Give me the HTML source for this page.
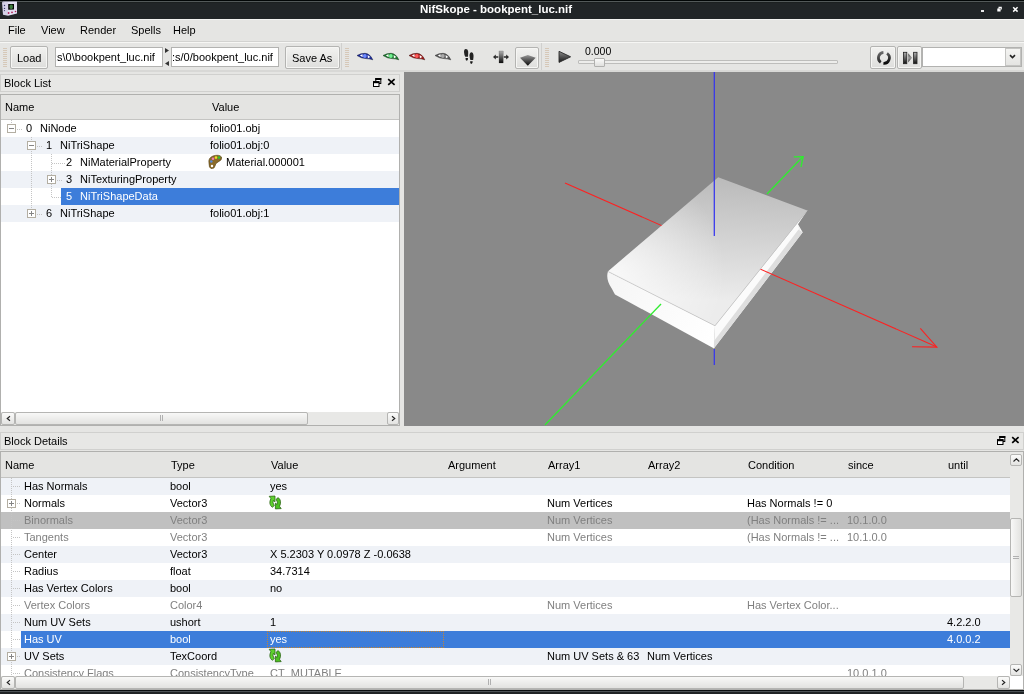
<!DOCTYPE html>
<html><head><meta charset="utf-8">
<style>
*{margin:0;padding:0;box-sizing:border-box}
.t{will-change:transform}
html,body{width:1024px;height:694px;overflow:hidden;background:#e5e5e3;font-family:"Liberation Sans",sans-serif;font-size:11px;color:#000}
.a{position:absolute}
.t{position:absolute;white-space:nowrap;line-height:17px;height:17px}
.btn{position:absolute;border:1px solid #b4b4b2;border-radius:2px;background:linear-gradient(#f2f2f0,#e6e6e4 60%,#dededc);box-shadow:inset 0 0 0 1px #f6f6f4}
.fld{position:absolute;background:#fff;border:1px solid #b2b2b0;overflow:hidden}
.grip{position:absolute;width:4px;background:repeating-linear-gradient(#d6c8b8 0 1px,transparent 1px 2px)}
.alt{background:#eff2f7}
.sel{background:#3d7dda;color:#fff}
.dis{background:#c0c0c0}
.g{color:#808080}
.box{position:absolute;width:9px;height:9px;border:1px solid #b3aea2;background:#fff}
.box:before{content:"";position:absolute;left:1px;top:3px;width:5px;height:1px;background:#858585}
.box.p:after{content:"";position:absolute;left:3px;top:1px;width:1px;height:5px;background:#858585}
.vd{position:absolute;width:1px;background:repeating-linear-gradient(#c4c4c4 0 1px,transparent 1px 2px)}
.hd{position:absolute;height:1px;background:repeating-linear-gradient(90deg,#c4c4c4 0 1px,transparent 1px 2px)}
.sbb{position:absolute;border:1px solid #b5b5b3;border-radius:2px;background:linear-gradient(#fbfbfa,#e3e3e1)}
</style></head><body>

<!-- title bar -->
<div class="a" style="left:0;top:0;width:1024px;height:1px;background:#020606"></div>
<div class="a" style="left:0;top:1px;width:1024px;height:1px;background:#535959"></div><div class="a" style="left:0;top:2px;width:1024px;height:1px;background:#1c2020"></div>
<div class="a" style="left:0;top:3px;width:1024px;height:15.5px;background:#212527"></div>
<div class="t" style="left:420px;top:1px;line-height:17px;font-weight:bold;font-size:11.5px;color:#fff">NifSkope - bookpent_luc.nif</div>
<!-- app icon -->
<svg class="a" style="left:0;top:0" width="20" height="18" viewBox="0 0 20 18">
<path d="M2 2.3 L8 1.8 L8 15.8 L3 14.8 Z" fill="#d6d2e8"/>
<path d="M8 1.8 L17 1.5 L17 13.6 L8 15.8Z" fill="#e2def0"/>
<path d="M2 2.3 L8 1.8 L17 1.5 L16 1.2 L3 1.5Z" fill="#c9c3e0"/>
<path d="M8.2 4 L14 3.9 L14 9.6 L8.2 9.7Z" fill="#060606"/>
<ellipse cx="11.2" cy="6.8" rx="1.8" ry="2.4" fill="#3d7a3d"/>
<circle cx="8.6" cy="13" r="0.9" fill="#b02058"/><circle cx="12" cy="12.3" r="0.9" fill="#b02058"/><circle cx="15.5" cy="11.5" r="0.8" fill="#b02058"/>
<circle cx="4.5" cy="5.5" r="0.7" fill="#3a3a6a"/><circle cx="4.5" cy="8.4" r="0.7" fill="#3a3a6a"/><circle cx="4.5" cy="10.6" r="0.6" fill="#3a3a6a"/>
</svg>
<!-- window buttons -->
<div class="a" style="left:981px;top:10px;width:3px;height:2px;background:#e8e8e8"></div>
<svg class="a" style="left:996px;top:6px" width="7" height="6" viewBox="0 0 7 6"><path d="M2.5 0.8h3.3v2.8h-1.2v1.8h-3.3v-2.8h1.2z" fill="#fff"/><path d="M3.6 2.2h1v1h-1z" fill="#202427"/></svg>
<svg class="a" style="left:1012px;top:6px" width="7" height="7" viewBox="0 0 7 7"><path d="M1.2 1.2L5.6 5.6M5.6 1.2L1.2 5.6" stroke="#fff" stroke-width="1.5"/></svg>
<!-- menu bar -->
<div class="a" style="left:0;top:18.5px;width:1024px;height:1px;background:#f3f3f1"></div>
<div class="a" style="left:0;top:41px;width:1024px;height:1px;background:#d2d2d0"></div>
<div class="a" style="left:0;top:42px;width:1024px;height:1px;background:#f6f6f4"></div>
<div class="t" style="left:8px;top:22px">File</div>
<div class="t" style="left:41px;top:22px">View</div>
<div class="t" style="left:80px;top:22px">Render</div>
<div class="t" style="left:131px;top:22px">Spells</div>
<div class="t" style="left:173px;top:22px">Help</div>

<!-- toolbar -->
<div class="a" style="left:0;top:70px;width:1024px;height:2px;background:#d8d8d6"></div>
<div class="grip" style="left:3px;top:48px;height:19px"></div>
<div class="btn" style="left:10px;top:46px;width:38px;height:23px"></div>
<div class="t" style="left:17px;top:50px">Load</div>
<div class="fld" style="left:55px;top:47px;width:108px;height:20px"><div class="t" style="left:-2px;top:1px">:s\0\bookpent_luc.nif</div></div>
<svg class="a" style="left:164px;top:48px" width="6" height="18"><path d="M1 0L5 2.5L1 5Z M5 13L1 15.5L5 18Z" fill="#333"/></svg>
<div class="fld" style="left:171px;top:47px;width:108px;height:20px"><div class="t" style="left:0px;top:1px">:s/0/bookpent_luc.nif</div></div>
<div class="btn" style="left:285px;top:46px;width:55px;height:23px"></div>
<div class="t" style="left:292px;top:50px">Save As</div>
<div class="a" style="left:341px;top:43px;width:1px;height:27px;background:#d0d0ce"></div>
<div class="grip" style="left:345px;top:48px;height:19px"></div>

<!-- eyes -->
<svg class="a" style="left:355px;top:50px" width="100" height="14" viewBox="0 0 100 14">
<g id="eye1"><path d="M2 5.5 Q6 3.2 10 3.3 Q15 3.6 17.8 9.8 Q14 8.6 11 8.6 Q6 8.3 2 5.5Z" fill="#1c2a9c" stroke="#101840" stroke-width="0.5"/>
<ellipse cx="9.8" cy="6.1" rx="1.9" ry="2" fill="#6f8cff"/>
<path d="M4.8 5.3 L7.6 4.3 L7.6 7.3Z M12.6 5 L15.3 6.9 L12.9 8.2Z" fill="#fff"/></g>
<g transform="translate(26,0)"><path d="M2 5.5 Q6 3.2 10 3.3 Q15 3.6 17.8 9.8 Q14 8.6 11 8.6 Q6 8.3 2 5.5Z" fill="#1e7a30" stroke="#103818" stroke-width="0.5"/>
<ellipse cx="9.8" cy="6.1" rx="1.9" ry="2" fill="#70f090"/>
<path d="M4.8 5.3 L7.6 4.3 L7.6 7.3Z M12.6 5 L15.3 6.9 L12.9 8.2Z" fill="#fff"/></g>
<g transform="translate(52,0)"><path d="M2 5.5 Q6 3.2 10 3.3 Q15 3.6 17.8 9.8 Q14 8.6 11 8.6 Q6 8.3 2 5.5Z" fill="#a01818" stroke="#401010" stroke-width="0.5"/>
<ellipse cx="9.8" cy="6.1" rx="1.9" ry="2" fill="#ff5a5a"/>
<path d="M4.8 5.3 L7.6 4.3 L7.6 7.3Z M12.6 5 L15.3 6.9 L12.9 8.2Z" fill="#fff"/></g>
<g transform="translate(78,0)"><path d="M2 5.5 Q6 3.2 10 3.3 Q15 3.6 17.8 9.8 Q14 8.6 11 8.6 Q6 8.3 2 5.5Z" fill="#5a5a5a" stroke="#303030" stroke-width="0.5"/>
<ellipse cx="9.8" cy="6.1" rx="1.9" ry="2" fill="#aaaaaa"/>
<path d="M4.8 5.3 L7.6 4.3 L7.6 7.3Z M12.6 5 L15.3 6.9 L12.9 8.2Z" fill="#fff"/></g>
</svg>
<!-- footprints -->
<svg class="a" style="left:460px;top:46px" width="16" height="20" viewBox="0 0 16 20">
<path d="M5.8 2.9 Q4 3 4 6 Q4.2 9 5.3 10.8 L8 10.8 Q8.4 7 8.1 5 Q7.6 2.8 5.8 2.9Z" fill="#222"/>
<path d="M5.5 12.1 L8 12.1 Q8.2 14.8 6.7 14.8 Q5.4 14.6 5.5 12.1Z" fill="#1a1a1a"/>
<path d="M11.6 6.2 Q9.5 6.4 9.5 9.5 Q9.7 12.5 10.4 14.1 L13.1 14.1 Q13.7 11 13.5 9 Q13.1 6.1 11.6 6.2Z" fill="#222"/>
<path d="M10.1 15.3 L12.7 15.3 Q12.8 18 11.3 18 Q10 17.8 10.1 15.3Z" fill="#1a1a1a"/>
</svg>
<!-- arrows icon -->
<svg class="a" style="left:492px;top:50px" width="18" height="14" viewBox="0 0 18 14">
<defs><linearGradient id="bg1" x1="0" y1="0" x2="0" y2="1"><stop offset="0" stop-color="#b0b0b0"/><stop offset="1" stop-color="#0a0a0a"/></linearGradient></defs>
<rect x="7" y="1" width="4.2" height="12" fill="url(#bg1)" stroke="#333" stroke-width="0.2"/>
<path d="M1 7 L3.8 4.6 L3.8 6.3 L6.3 6.3 L6.3 7.7 L3.8 7.7 L3.8 9.4Z M17 7 L14.2 4.6 L14.2 6.3 L11.8 6.3 L11.8 7.7 L14.2 7.7 L14.2 9.4Z" fill="#2a2a2a"/>
</svg>
<!-- dropdown button -->
<div class="btn" style="left:515px;top:47px;width:24px;height:22px"></div>
<svg class="a" style="left:519px;top:54px" width="18" height="13" viewBox="519 54 18 13">
<defs><linearGradient id="tg" x1="0" y1="0" x2="0" y2="1"><stop offset="0" stop-color="#9a9a9a"/><stop offset="1" stop-color="#080808"/></linearGradient></defs>
<path d="M520 57.8 L527.8 55 L535.7 57.8 L527.8 65.8Z" fill="url(#tg)"/>
</svg>
<div class="a" style="left:541px;top:43px;width:1px;height:27px;background:#d0d0ce"></div>
<div class="grip" style="left:545px;top:48px;height:19px"></div>
<!-- play -->
<svg class="a" style="left:557px;top:50px" width="15" height="14" viewBox="0 0 15 14">
<defs><linearGradient id="pg" x1="0" y1="0" x2="0" y2="1"><stop offset="0" stop-color="#8a8a8a"/><stop offset="1" stop-color="#1a1a1a"/></linearGradient></defs>
<path d="M2 1.3 L13.6 6.8 L2 12.4Z" fill="url(#pg)" stroke="#2a2a2a" stroke-width="0.9" stroke-linejoin="round"/>
</svg>
<div class="t" style="left:585px;top:43px;font-size:10.5px">0.000</div>
<div class="a" style="left:578px;top:60px;width:260px;height:4px;border:1px solid #bdbdbb;background:#ededeb;border-radius:1px"></div>
<div class="a" style="left:594px;top:58px;width:11px;height:9px;border:1px solid #b0b0ae;background:linear-gradient(#fafaf9,#e0e0de);border-radius:1px"></div>
<!-- right buttons -->
<div class="btn" style="left:870px;top:46px;width:26px;height:23px"></div>
<svg class="a" style="left:874px;top:48px" width="20" height="20" viewBox="0 0 20 20">
<defs><linearGradient id="lg1" x1="0" y1="0" x2="0" y2="1"><stop offset="0" stop-color="#6a6a6a"/><stop offset="1" stop-color="#2a2a2a"/></linearGradient>
<linearGradient id="lg2" x1="0" y1="0" x2="0" y2="1"><stop offset="0" stop-color="#555"/><stop offset="1" stop-color="#0a0a0a"/></linearGradient></defs>
<path d="M9.42 4.32 A5.5 5.5 0 0 0 6.75 14.3" fill="none" stroke="url(#lg1)" stroke-width="2.7"/>
<path d="M13.05 5.3 A5.5 5.5 0 0 1 9.42 15.28" fill="none" stroke="url(#lg2)" stroke-width="2.7"/>
</svg>
<div class="btn" style="left:897px;top:46px;width:25px;height:23px"></div>
<svg class="a" style="left:902px;top:51px" width="16" height="14" viewBox="0 0 16 14">
<defs><linearGradient id="sg" x1="0" y1="0" x2="0" y2="1"><stop offset="0" stop-color="#b0b0b0"/><stop offset="1" stop-color="#111"/></linearGradient>
<linearGradient id="sg2" x1="0" y1="0" x2="0" y2="1"><stop offset="0" stop-color="#444"/><stop offset="0.5" stop-color="#999"/><stop offset="1" stop-color="#333"/></linearGradient></defs>
<rect x="1.4" y="1.3" width="3.4" height="11.4" fill="url(#sg)" stroke="#222" stroke-width="0.8"/>
<rect x="11.6" y="1.3" width="3.4" height="11.4" fill="url(#sg)" stroke="#222" stroke-width="0.8"/>
<path d="M6.2 2.3 L10 6.8 L6.2 11.6Z" fill="url(#sg2)"/>
</svg>
<div class="fld" style="left:922px;top:47px;width:100px;height:20px"></div>
<div class="a" style="left:1005px;top:48px;width:16px;height:18px;border:1px solid #c4c4c2;background:linear-gradient(#f4f4f2,#e4e4e2)"></div>
<svg class="a" style="left:1009px;top:54px" width="7" height="5"><path d="M1 1.2L3.5 3.6L6 1.2" fill="none" stroke="#222" stroke-width="1.6"/></svg>


<!-- viewport -->
<svg class="a" style="left:404px;top:72px" width="620" height="354" viewBox="404 72 620 354">
<defs>
<linearGradient id="cov" gradientUnits="userSpaceOnUse" x1="718" y1="177" x2="712" y2="300">
<stop offset="0" stop-color="#bababa"/><stop offset="1" stop-color="#ececec"/></linearGradient>
<radialGradient id="covh" gradientUnits="userSpaceOnUse" cx="615" cy="272" r="110">
<stop offset="0" stop-color="#fff" stop-opacity="0.75"/><stop offset="1" stop-color="#fff" stop-opacity="0"/></radialGradient>
<linearGradient id="spn" gradientUnits="userSpaceOnUse" x1="610" y1="280" x2="714" y2="340">
<stop offset="0" stop-color="#f6f6f6"/><stop offset="1" stop-color="#ffffff"/></linearGradient>
</defs>
<rect x="404" y="72" width="620" height="354" fill="#898989"/>
<!-- spine/front face -->
<path d="M607.9 271.4 Q605.5 280 611.9 288.8 Q613.5 292 615 294.4 L714.1 348.6 L715 325.8Z" fill="url(#spn)"/>
<!-- pages right face -->
<path d="M715 325.8 L807.3 210.4 L798 224.2 L802.7 232.3 L713.8 348.6Z" fill="#fbfbfb"/>
<path d="M798.5 229.5 L802.7 232.3 L713.8 348.6 L714 341Z" fill="#dedede"/>
<path d="M798 224.2 L800 230 L799.5 231 Z" fill="#e6e6e6"/>
<!-- axes -->
<line x1="565" y1="183" x2="937" y2="347" stroke="#ff2020" stroke-width="1.05"/>
<path d="M920.3 328.4 L936.9 347.1 L912 346.7" fill="none" stroke="#ff2020" stroke-width="1.05"/>
<line x1="545" y1="425" x2="661" y2="304" stroke="#30ec30" stroke-width="1.35"/>
<line x1="767" y1="194" x2="803" y2="156.5" stroke="#30ec30" stroke-width="1.35"/>
<path d="M793.8 156.9 L803.1 156.6 L801 167" fill="none" stroke="#30ec30" stroke-width="1.35"/>
<!-- cover -->
<path d="M718.2 177.2 L807.3 210.4 L715 325.8 L607.9 271.4 Z" fill="url(#cov)"/>
<path d="M718.2 177.2 L807.3 210.4 L715 325.8 L607.9 271.4 Z" fill="url(#covh)"/>
<path d="M807.3 210.4 L715 325.8 L607.9 271.4" fill="none" stroke="#c4c4c4" stroke-width="0.7"/>
<line x1="714.3" y1="72" x2="714.3" y2="236" stroke="#3535ee" stroke-width="1.25"/>
<line x1="714.3" y1="349" x2="714.3" y2="365" stroke="#3535ee" stroke-width="1.25"/>
</svg>

<!-- Block list dock -->
<div class="a" style="left:0;top:74px;width:400px;height:18px;border:1px solid #d0d0ce;background:#e7e7e5"></div>
<div class="t" style="left:4px;top:75px">Block List</div>
<svg class="a" style="left:373px;top:78px" width="9" height="9" viewBox="0 0 9 9"><rect x="2.8" y="0.5" width="5" height="5" fill="#fff" stroke="#000" stroke-width="1"/><rect x="2.3" y="0" width="6" height="2" fill="#000"/><rect x="0.5" y="3.7" width="5.5" height="4.8" fill="#fff" stroke="#000" stroke-width="1"/><rect x="0" y="3.2" width="6.5" height="2" fill="#000"/></svg>
<svg class="a" style="left:387px;top:78px" width="9" height="8" viewBox="0 0 9 8"><path d="M1.2 1.2L7.6 6.8M7.6 1.2L1.2 6.8" stroke="#000" stroke-width="1.7"/></svg>

<div class="a" style="left:0;top:94px;width:400px;height:332px;border:1px solid #b0b0ae;background:#fff;overflow:hidden">
 <div class="a" style="left:0;top:0;width:398px;height:25px;background:#e4e4e2;border-bottom:1px solid #c4c4c2"></div>
 <div class="t" style="left:4px;top:4px">Name</div>
 <div class="t" style="left:211px;top:4px">Value</div>
 <div class="a alt" style="left:0;top:42px;width:398px;height:17px"></div>
 <div class="a alt" style="left:0;top:76px;width:398px;height:17px"></div>
 <div class="a sel" style="left:60px;top:93px;width:338px;height:17px"></div>
 <div class="a alt" style="left:0;top:110px;width:398px;height:17px"></div>
 <!-- tree lines -->
 <div class="hd" style="left:16px;top:34px;width:5px"></div>
 <div class="vd" style="left:30px;top:42px;height:77px"></div>
 <div class="hd" style="left:36px;top:51px;width:5px"></div>
 <div class="vd" style="left:50px;top:59px;height:43px"></div>
 <div class="hd" style="left:51px;top:68px;width:13px"></div>
 <div class="hd" style="left:56px;top:85px;width:5px"></div>
 <div class="hd" style="left:51px;top:102px;width:9px"></div>
 <div class="hd" style="left:36px;top:119px;width:5px"></div>
 <div class="vd" style="left:10px;top:25px;height:4px"></div>
 <div class="box" style="left:6px;top:29px"></div>
 <div class="box" style="left:26px;top:46px"></div>
 <div class="box p" style="left:46px;top:80px"></div>
 <div class="box p" style="left:26px;top:114px"></div>
 <div class="t" style="left:25px;top:25px">0</div><div class="t" style="left:39px;top:25px">NiNode</div>
 <div class="t" style="left:45px;top:42px">1</div><div class="t" style="left:59px;top:42px">NiTriShape</div>
 <div class="t" style="left:65px;top:59px">2</div><div class="t" style="left:79px;top:59px">NiMaterialProperty</div>
 <div class="t" style="left:65px;top:76px">3</div><div class="t" style="left:79px;top:76px">NiTexturingProperty</div>
 <div class="t" style="left:65px;top:93px;color:#fff">5</div><div class="t" style="left:79px;top:93px;color:#fff">NiTriShapeData</div>
 <div class="t" style="left:45px;top:110px">6</div><div class="t" style="left:59px;top:110px">NiTriShape</div>
 <div class="t" style="left:209px;top:25px">folio01.obj</div>
 <div class="t" style="left:209px;top:42px">folio01.obj:0</div>
 <svg class="a" style="left:206px;top:59px" width="16" height="16" viewBox="0 0 16 16">
  <path d="M2 9 Q1 4 6 2 Q12 0 14.5 3 Q15.5 6 11 8 Q8 9.5 8 12 Q7.5 15 4 14.5 Q2 14 2 9Z" fill="#8a6a2a" stroke="#5e4818" stroke-width="0.7"/>
  <circle cx="4.3" cy="7.5" r="1.3" fill="#5a8ad8"/><circle cx="6" cy="4.8" r="1.3" fill="#f07ab0"/><circle cx="9" cy="3.6" r="1.3" fill="#f0e020"/><circle cx="12" cy="3.6" r="1.3" fill="#30c030"/><circle cx="5" cy="12" r="1.2" fill="#fff"/>
 </svg>
 <div class="t" style="left:225px;top:59px">Material.000001</div>
 <div class="t" style="left:209px;top:110px">folio01.obj:1</div>
 <!-- h scrollbar -->
 <div class="a" style="left:0;top:317px;width:398px;height:13px;background:#e8e8e6"></div>
 <div class="sbb" style="left:0;top:317px;width:14px;height:13px"></div>
 <div class="sbb" style="left:14px;top:317px;width:293px;height:13px;background:linear-gradient(#f8f8f7,#e2e2e0)"></div>
 <div class="a" style="left:159px;top:320px;width:3px;height:6px;border-left:1px solid #b0b0b0;border-right:1px solid #b0b0b0"></div>
 <div class="sbb" style="left:386px;top:317px;width:12px;height:13px"></div>
 <svg class="a" style="left:5px;top:320px" width="6" height="7"><path d="M4 1.2L1.2 3.5L4 5.7" fill="none" stroke="#222" stroke-width="1.1"/></svg>
 <svg class="a" style="left:390px;top:320px" width="6" height="7"><path d="M1 1.2L3.8 3.5L1 5.7" fill="none" stroke="#222" stroke-width="1.1"/></svg>
</div>


<!-- DETAILS START -->
<!-- Block details dock -->
<div class="a" style="left:0;top:432px;width:1024px;height:18px;border:1px solid #d0d0ce;background:#e7e7e5"></div>
<div class="t" style="left:4px;top:433px">Block Details</div>
<svg class="a" style="left:997px;top:436px" width="9" height="9" viewBox="0 0 9 9"><rect x="2.8" y="0.5" width="5" height="5" fill="#fff" stroke="#000" stroke-width="1"/><rect x="2.3" y="0" width="6" height="2" fill="#000"/><rect x="0.5" y="3.7" width="5.5" height="4.8" fill="#fff" stroke="#000" stroke-width="1"/><rect x="0" y="3.2" width="6.5" height="2" fill="#000"/></svg>
<svg class="a" style="left:1011px;top:436px" width="9" height="8" viewBox="0 0 9 8"><path d="M1.2 1.2L7.6 6.8M7.6 1.2L1.2 6.8" stroke="#000" stroke-width="1.7"/></svg>
<div class="a" style="left:0;top:451px;width:1024px;height:239px;border:1px solid #b0b0ae;background:#fff;overflow:hidden">
 <div class="a" style="left:0;top:0;width:1009px;height:26px;background:#e4e4e2;border-bottom:1px solid #c4c4c2"></div>
 <div class="t" style="left:4px;top:5px">Name</div>
 <div class="t" style="left:170px;top:5px">Type</div>
 <div class="t" style="left:270px;top:5px">Value</div>
 <div class="t" style="left:447px;top:5px">Argument</div>
 <div class="t" style="left:547px;top:5px">Array1</div>
 <div class="t" style="left:647px;top:5px">Array2</div>
 <div class="t" style="left:747px;top:5px">Condition</div>
 <div class="t" style="left:847px;top:5px">since</div>
 <div class="t" style="left:947px;top:5px">until</div>
 <div class="a alt" style="left:0;top:26px;width:1009px;height:17px"></div>
 <div class="a dis" style="left:0;top:60px;width:1009px;height:17px"></div>
 <div class="a alt" style="left:0;top:94px;width:1009px;height:17px"></div>
 <div class="a alt" style="left:0;top:128px;width:1009px;height:17px"></div>
 <div class="a alt" style="left:0;top:162px;width:1009px;height:17px"></div>
 <div class="a sel" style="left:20px;top:179px;width:989px;height:17px"></div>
 <div class="a" style="left:266px;top:179px;width:177px;height:17px;border:1px dotted #c8842c"></div>
 <div class="a alt" style="left:0;top:196px;width:1009px;height:17px"></div>
 <div class="vd" style="left:10px;top:26px;height:200px"></div>
 <div class="hd" style="left:12px;top:34px;width:7px"></div>
 <div class="t" style="left:23px;top:26px;color:#000">Has Normals</div>
 <div class="t" style="left:169px;top:26px;color:#000">bool</div>
 <div class="t" style="left:269px;top:26px;color:#000">yes</div>
 <div class="hd" style="left:12px;top:51px;width:7px"></div>
 <div class="box p" style="left:6px;top:47px"></div>
 <div class="t" style="left:23px;top:43px;color:#000">Normals</div>
 <div class="t" style="left:169px;top:43px;color:#000">Vector3</div>
 <svg class="a" style="left:266px;top:43px" width="16" height="15" viewBox="0 0 16 15"><path d="M2.2 1.3 L8 1 L8 6.8 L6.3 5.4 Q5.2 7.5 7.3 10.6 L5.2 12.3 Q1.2 9 3.9 3.6 Z" fill="#5ed22e" stroke="#2c6414" stroke-width="0.8"/><path d="M14.2 13.6 L8.4 13.9 L8.4 8.1 L10.1 9.5 Q11.2 7.4 9.1 4.3 L11.2 2.6 Q15.2 5.9 12.5 11.3 Z" fill="#4cc020" stroke="#2c6414" stroke-width="0.8"/></svg>
 <div class="t" style="left:546px;top:43px;color:#000">Num Vertices</div>
 <div class="t" style="left:746px;top:43px;color:#000">Has Normals != 0</div>
 <div class="hd" style="left:12px;top:68px;width:7px"></div>
 <div class="t" style="left:23px;top:60px;color:#808080">Binormals</div>
 <div class="t" style="left:169px;top:60px;color:#808080">Vector3</div>
 <div class="t" style="left:546px;top:60px;color:#808080">Num Vertices</div>
 <div class="t" style="left:746px;top:60px;color:#808080">(Has Normals != ...</div>
 <div class="t" style="left:846px;top:60px;color:#808080">10.1.0.0</div>
 <div class="hd" style="left:12px;top:85px;width:7px"></div>
 <div class="t" style="left:23px;top:77px;color:#808080">Tangents</div>
 <div class="t" style="left:169px;top:77px;color:#808080">Vector3</div>
 <div class="t" style="left:546px;top:77px;color:#808080">Num Vertices</div>
 <div class="t" style="left:746px;top:77px;color:#808080">(Has Normals != ...</div>
 <div class="t" style="left:846px;top:77px;color:#808080">10.1.0.0</div>
 <div class="hd" style="left:12px;top:102px;width:7px"></div>
 <div class="t" style="left:23px;top:94px;color:#000">Center</div>
 <div class="t" style="left:169px;top:94px;color:#000">Vector3</div>
 <div class="t" style="left:269px;top:94px;color:#000">X 5.2303 Y 0.0978 Z -0.0638</div>
 <div class="hd" style="left:12px;top:119px;width:7px"></div>
 <div class="t" style="left:23px;top:111px;color:#000">Radius</div>
 <div class="t" style="left:169px;top:111px;color:#000">float</div>
 <div class="t" style="left:269px;top:111px;color:#000">34.7314</div>
 <div class="hd" style="left:12px;top:136px;width:7px"></div>
 <div class="t" style="left:23px;top:128px;color:#000">Has Vertex Colors</div>
 <div class="t" style="left:169px;top:128px;color:#000">bool</div>
 <div class="t" style="left:269px;top:128px;color:#000">no</div>
 <div class="hd" style="left:12px;top:153px;width:7px"></div>
 <div class="t" style="left:23px;top:145px;color:#808080">Vertex Colors</div>
 <div class="t" style="left:169px;top:145px;color:#808080">Color4</div>
 <div class="t" style="left:546px;top:145px;color:#808080">Num Vertices</div>
 <div class="t" style="left:746px;top:145px;color:#808080">Has Vertex Color...</div>
 <div class="hd" style="left:12px;top:170px;width:7px"></div>
 <div class="t" style="left:23px;top:162px;color:#000">Num UV Sets</div>
 <div class="t" style="left:169px;top:162px;color:#000">ushort</div>
 <div class="t" style="left:269px;top:162px;color:#000">1</div>
 <div class="t" style="left:946px;top:162px;color:#000">4.2.2.0</div>
 <div class="hd" style="left:12px;top:187px;width:7px"></div>
 <div class="t" style="left:23px;top:179px;color:#fff">Has UV</div>
 <div class="t" style="left:169px;top:179px;color:#fff">bool</div>
 <div class="t" style="left:269px;top:179px;color:#fff">yes</div>
 <div class="t" style="left:946px;top:179px;color:#fff">4.0.0.2</div>
 <div class="hd" style="left:12px;top:204px;width:7px"></div>
 <div class="box p" style="left:6px;top:200px"></div>
 <div class="t" style="left:23px;top:196px;color:#000">UV Sets</div>
 <div class="t" style="left:169px;top:196px;color:#000">TexCoord</div>
 <svg class="a" style="left:266px;top:196px" width="16" height="15" viewBox="0 0 16 15"><path d="M2.2 1.3 L8 1 L8 6.8 L6.3 5.4 Q5.2 7.5 7.3 10.6 L5.2 12.3 Q1.2 9 3.9 3.6 Z" fill="#5ed22e" stroke="#2c6414" stroke-width="0.8"/><path d="M14.2 13.6 L8.4 13.9 L8.4 8.1 L10.1 9.5 Q11.2 7.4 9.1 4.3 L11.2 2.6 Q15.2 5.9 12.5 11.3 Z" fill="#4cc020" stroke="#2c6414" stroke-width="0.8"/></svg>
 <div class="t" style="left:546px;top:196px;color:#000">Num UV Sets &amp; 63</div>
 <div class="t" style="left:646px;top:196px;color:#000">Num Vertices</div>
 <div class="hd" style="left:12px;top:221px;width:7px"></div>
 <div class="t" style="left:23px;top:213px;color:#808080">Consistency Flags</div>
 <div class="t" style="left:169px;top:213px;color:#808080">ConsistencyType</div>
 <div class="t" style="left:269px;top:213px;color:#808080">CT_MUTABLE</div>
 <div class="t" style="left:846px;top:213px;color:#808080">10.0.1.0</div>

 <!-- v scrollbar -->
 <div class="a" style="left:1009px;top:0;width:13px;height:224px;background:#e8e8e6"></div>
 <div class="sbb" style="left:1009px;top:2px;width:12px;height:12px"></div>
 <svg class="a" style="left:1012px;top:6px" width="7" height="5"><path d="M0.5 3.5L3.4 0.8L6.3 3.5" fill="none" stroke="#222" stroke-width="1.1"/></svg>
 <div class="sbb" style="left:1009px;top:66px;width:12px;height:79px;background:linear-gradient(90deg,#f8f8f7,#e2e2e0)"></div>
 <div class="a" style="left:1012px;top:104px;width:6px;height:3px;border-top:1px solid #b0b0b0;border-bottom:1px solid #b0b0b0"></div>
 <div class="sbb" style="left:1009px;top:212px;width:12px;height:12px"></div>
 <svg class="a" style="left:1012px;top:216px" width="7" height="5"><path d="M0.5 0.8L3.4 3.5L6.3 0.8" fill="none" stroke="#222" stroke-width="1.1"/></svg>
 <!-- h scrollbar -->
 <div class="a" style="left:0;top:224px;width:1009px;height:14px;background:#e8e8e6"></div>
 <div class="sbb" style="left:0;top:224px;width:14px;height:13px"></div>
 <div class="sbb" style="left:14px;top:224px;width:949px;height:13px;background:linear-gradient(#f8f8f7,#e2e2e0)"></div>
 <div class="a" style="left:487px;top:227px;width:3px;height:6px;border-left:1px solid #b0b0b0;border-right:1px solid #b0b0b0"></div>
 <div class="sbb" style="left:996px;top:224px;width:13px;height:13px"></div>
 <svg class="a" style="left:5px;top:227px" width="6" height="7"><path d="M4 1.2L1.2 3.5L4 5.7" fill="none" stroke="#222" stroke-width="1.1"/></svg>
 <svg class="a" style="left:1000px;top:227px" width="6" height="7"><path d="M1 1.2L3.8 3.5L1 5.7" fill="none" stroke="#222" stroke-width="1.1"/></svg>
 <div class="a" style="left:1009px;top:224px;width:13px;height:14px;background:#fff"></div>
</div>
<div class="a" style="left:0;top:690px;width:1024px;height:4px;background:#1f2325"></div><div class="a" style="left:0;top:690px;width:1024px;height:1px;background:#0a0e10"></div><div class="a" style="left:0;top:691px;width:1024px;height:1px;background:#4b5155"></div>
<!-- DETAILS END -->
</body></html>
